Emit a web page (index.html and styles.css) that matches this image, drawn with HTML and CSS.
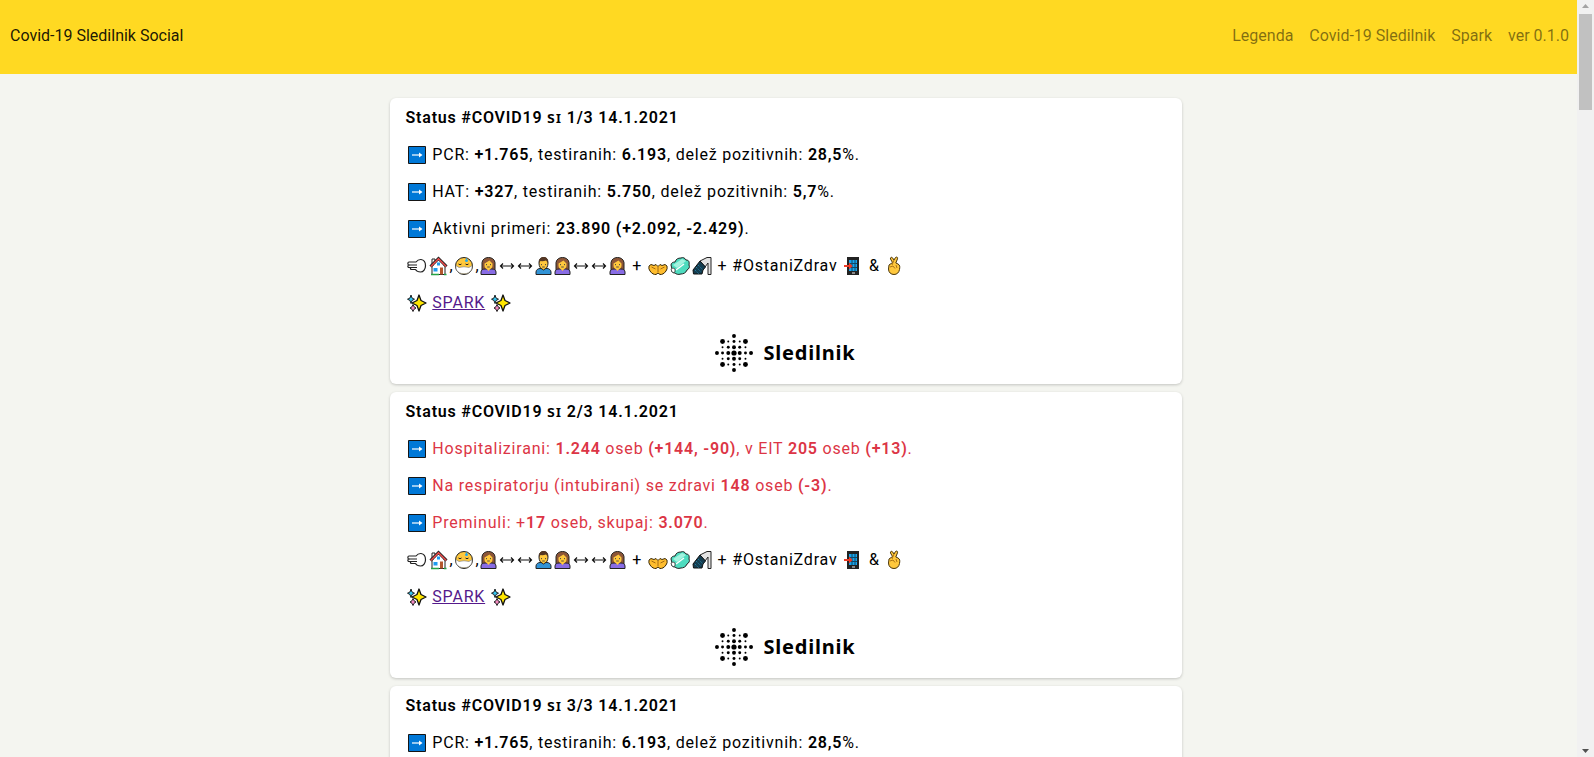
FILE: index.html
```html
<!DOCTYPE html>
<html lang="sl">
<head>
<meta charset="utf-8">
<meta name="viewport" content="width=device-width, initial-scale=1">
<title>Covid-19 Sledilnik Social</title>
<link rel="stylesheet" href="styles.css">
</head>
<body>
<svg class="sprite" aria-hidden="true">
  <symbol id="arrow" viewBox="0 0 22 20">
    <path fill="#0078d7" stroke="#151515" d="M2.500 1.500h17v17h-17z"/>
    <path fill="none" stroke="#fff" stroke-width="1.200" d="M6 10h9"/>
    <path fill="#fff" d="M13 7.500l3.500 2.500-3.500 2.500z"/>
  </symbol>
  <symbol id="wind" viewBox="0 0 22 20">
    <path fill="#fff" stroke="#222" stroke-width="1.200" stroke-linejoin="round" d="M3 6h7c1.500-2 3-2.600 5-2.500 3 .4 4.500 3 4.500 6.200s-2 6.300-5 6.300c-2 0-4-.8-5-2.500H5.500c-1.500 0-1.500-2 0-2H3c-1.500 0-1.500-2.500 0-2.500-1.500 0-1.500-3 0-3z"/>
    <path fill="none" stroke="#222" stroke-width="1.100" d="M3 9h8M4 11.500h7"/>
  </symbol>
  <symbol id="house" viewBox="0 0 22 20">
    <path fill="#fff" stroke="#222" d="M4 9.500h13v9H4z"/>
    <path fill="#fff" stroke="#222" d="M4 10V3h3v5"/>
    <path fill="#fff" d="M4.500 10.500L10.500 4l6 6.500z"/>
    <path fill="none" stroke="#222" stroke-width="3" d="M2.500 10.500l8-8 8 8"/>
    <path fill="none" stroke="#ef4b4b" stroke-width="1.500" d="M2.800 10.500l7.700-7.700 7.700 7.700"/>
    <path fill="#1d9bf0" d="M5.500 12h4v3.500h-4zM9 6.500h3v3H9z"/>
    <path fill="#b4572c" d="M12 11.500h3v7h-3z"/>
    <path stroke="#26a344" stroke-width="1.500" d="M3 18.500h8M16 18.500h2.500"/>
  </symbol>
  <symbol id="mask" viewBox="0 0 22 20">
    <circle cx="11" cy="10" r="8.500" fill="#ffc83d" stroke="#222"/>
    <path fill="#fff" stroke="#777" stroke-width=".6" d="M2.800 9.500L6 11.500q5-1.500 10 0l3.200-2c0 4-1.500 6-3.700 7.300-2.500 1.200-6.500 1.200-9 0C4 15.500 2.800 13.500 2.800 9.500z"/>
    <path fill="none" stroke="#222" d="M5.500 8q1.500 1.500 3 0M12.500 8q1.500 1.500 3 0"/>
    <path fill="#22a8ef" d="M13.500 2l1.700 3q-1.700 1.800-3.400 0z"/>
  </symbol>
  <symbol id="woman" viewBox="0 0 18 20">
    <path fill="#8d5637" stroke="#222" d="M2.500 15V6.500C3 3 6 1.500 9 1.500s6 1.500 6.500 5V15z"/>
    <path fill="#886ce4" stroke="#222" d="M1.500 18.500v-2.500c0-2 2-3 4-3h7c2 0 4 1 4 3v2.500z"/>
    <path fill="#ffc83d" d="M5 7.500l5-3 3 3v2c0 1.700-1 3-2.200 3.500L9 15l-1.800-2C6 12.500 5 11.200 5 9.500z"/>
    <path stroke="#444" stroke-width=".9" fill="none" d="M7 8v1.200M11 8v1.200M7.700 11h2.600"/>
  </symbol>
  <symbol id="man" viewBox="0 0 18 20">
    <path fill="#3193d6" stroke="#222" d="M1.500 18.500v-2.500c0-2 2-3.500 4-3.500h7c2 0 4 1.500 4 3.500v2.500z"/>
    <path fill="#ffc83d" stroke="#222" d="M4.500 7C4.500 3.500 6 1.500 9 1.500s4.500 2 4.500 5.500-1.500 5.500-3 6L9 14l-1.500-1C6 12.500 4.500 10.500 4.500 7z"/>
    <path fill="#553724" d="M4.500 7C4 3 6.500 1 9.500 1c3 0 4.500 3 4 6L11.500 4.500q-3 1-5.500.5z"/>
    <path stroke="#444" stroke-width=".9" fill="none" d="M7 8v1.200M11 8v1.200M7.700 11h2.600"/>
  </symbol>
  <symbol id="both" viewBox="0 0 18 20">
    <path fill="none" stroke="#111" stroke-width="1.200" d="M2 10h14M5 7.500L2.500 10 5 12.500M13 7.500l2.500 2.500-2.500 2.500"/>
  </symbol>
  <symbol id="palms" viewBox="0 0 22 20">
    <path fill="#ffbd2e" stroke="#3a2a08" stroke-linejoin="round" d="M2 10l2-1.500 3 1 2-1 2 2 2-2 2 1 3-1L20 10q.7 3-1 5c-2 3-4 3.500-6 3.500L11 17l-2 1.500c-2 0-4-.5-6-3.500Q1.300 13 2 10z"/>
    <path fill="none" stroke="#a46b12" d="M11 11v5M4.500 11l4 2M17.500 11l-4 2"/>
  </symbol>
  <symbol id="soap" viewBox="0 0 22 20">
    <path fill="#4edcbf" stroke="#222" stroke-linejoin="round" d="M2 9c0-2 2-3 4-3 1-3 3-4 6-4 2-1 4 0 5 2 3 0 3.500 2 3 5 1 2 0 4-2 5-1 3-4 4-6 4-3 1-5 0-6-1-3 0-4-2-3-4z"/>
    <path fill="#a3f3df" d="M4 9l9-6 4 2-9 7z"/>
    <path stroke="#fff" stroke-width="1.300" d="M7 14l8-6"/>
    <path fill="#fff" stroke="#222" stroke-width=".7" d="M2 13q2-2 4 0v3q-3 2-4-3z"/>
  </symbol>
  <symbol id="shower" viewBox="0 0 22 20">
    <path fill="#e3e3e3" stroke="#222" d="M9 5l7-3.500h4v17h-3V7L14 11z"/>
    <path fill="#143d50" stroke="#111" d="M2 14L9 5l5.500 6-2.500 3-1 4H2.500z"/>
    <path fill="none" stroke="#2b91ba" stroke-dasharray="1 1.500" d="M7 9l5 5M5 11l5 5M4 14l4 4"/>
  </symbol>
  <symbol id="phone" viewBox="0 0 22 20">
    <path fill="#222" d="M5 1h12v18H5z"/>
    <path fill="#16a5ee" d="M7 4h8v11H7z"/>
    <path stroke="#124763" d="M10 4v11M13 4v11M7 7.500h8M7 11.500h8"/>
    <path stroke="#eee" d="M10 17h3"/>
    <path fill="#ed3b25" d="M2 9h5V6.500l3.500 3.500L7 13.500V11H2z"/>
  </symbol>
  <symbol id="fingers" viewBox="0 0 22 20">
    <path fill="#ffc83d" stroke="#4a360c" stroke-linejoin="round" d="M4 9L7.500 6.500 5.500 3c-.5-1.500 1-2.300 2-1.200L9 4l1.500-2.500c1-1 2.700-.2 2 1.300L10.800 7l2.200 1c2 1 2 3 1.500 5.500-.5 3-2.500 5-5.500 5S3.500 16.500 3.500 13z"/>
    <path fill="none" stroke="#ad7415" d="M9 4L7 9M5 11l3-1 2 2.500M11 9l1 3"/>
  </symbol>
  <symbol id="sparkles" viewBox="0 0 22 20">
    <path fill="#ffe600" stroke="#111" stroke-width="1.300" stroke-linejoin="round" d="M13 2l2 5.500 5 2.500-5 2.500L13 18l-2-5.500L6 10l5-2.500z"/>
    <path fill="#35c4f0" stroke="#111" stroke-width=".9" d="M5 2l1 3 2.500 1.200L6 7.500 5 10.500l-1-3-2.500-1.300L4 5z"/>
    <path fill="#f48ac0" stroke="#111" stroke-width=".9" d="M7 11.500l1 2.200 2 1.300-2 1.300-1 2.200-1-2.200L4 15l2-1.300z"/>
  </symbol>
  <symbol id="dots" viewBox="-58 -58 116 116">
    <g id="ray">
      <circle cy="-52" r="6"/>
      <circle cy="-35" r="4.500"/>
      <circle cy="-17.500" r="6"/>
      <circle cx="-35" cy="-35" r="7.500"/>
      <circle cx="-17.500" cy="-35" r="3"/>
      <circle cx="17.500" cy="-35" r="3"/>
      <circle cx="-17.500" cy="-17.500" r="4.500"/>
    </g>
    <use href="#ray" transform="rotate(90)"/>
    <use href="#ray" transform="rotate(180)"/>
    <use href="#ray" transform="rotate(270)"/>
    <circle r="8"/>
  </symbol>
</svg>

<header class="navbar">
  <a class="brand" href="#">Covid-19 Sledilnik Social</a>
  <nav class="links">
    <a href="#">Legenda</a>
    <a href="#">Covid-19 Sledilnik</a>
    <a href="#">Spark</a>
    <a href="#">ver 0.1.0</a>
  </nav>
</header>

<main class="feed">
  <article class="card">
    <h2 class="line">Status #COVID19 <span class="country">sɪ</span> 1/3 14.1.2021</h2>
    <p class="line"><svg class="emoji"><use href="#arrow"/></svg> PCR: <b>+1.765</b>, testiranih: <b>6.193</b>, delež pozitivnih: <b>28,5</b>%.</p>
    <p class="line"><svg class="emoji"><use href="#arrow"/></svg> HAT: <b>+327</b>, testiranih: <b>5.750</b>, delež pozitivnih: <b>5,7</b>%.</p>
    <p class="line"><svg class="emoji"><use href="#arrow"/></svg> Aktivni primeri: <b>23.890 (+2.092, -2.429)</b>.</p>
    <p class="line"><svg class="emoji"><use href="#wind"/></svg><svg class="emoji"><use href="#house"/></svg>,<svg class="emoji"><use href="#mask"/></svg>,<svg class="emoji person"><use href="#woman"/></svg><svg class="emoji both"><use href="#both"/></svg><svg class="emoji both"><use href="#both"/></svg><svg class="emoji person"><use href="#man"/></svg><svg class="emoji person"><use href="#woman"/></svg><svg class="emoji both"><use href="#both"/></svg><svg class="emoji both"><use href="#both"/></svg><svg class="emoji person"><use href="#woman"/></svg> + <svg class="emoji"><use href="#palms"/></svg><svg class="emoji"><use href="#soap"/></svg><svg class="emoji"><use href="#shower"/></svg> + #OstaniZdrav <svg class="emoji"><use href="#phone"/></svg> &amp; <svg class="emoji"><use href="#fingers"/></svg></p>
    <p class="line"><svg class="emoji"><use href="#sparkles"/></svg> <a class="spark" href="#">SPARK</a> <svg class="emoji"><use href="#sparkles"/></svg></p>
    <div class="logo"><svg class="dots"><use href="#dots"/></svg><span>Sledilnik</span></div>
  </article>

  <article class="card">
    <h2 class="line">Status #COVID19 <span class="country">sɪ</span> 2/3 14.1.2021</h2>
    <p class="line alert"><svg class="emoji"><use href="#arrow"/></svg> Hospitalizirani: <b>1.244</b> oseb <b>(+144, -90)</b>, v EIT <b>205</b> oseb <b>(+13)</b>.</p>
    <p class="line alert"><svg class="emoji"><use href="#arrow"/></svg> Na respiratorju (intubirani) se zdravi <b>148</b> oseb <b>(-3)</b>.</p>
    <p class="line alert"><svg class="emoji"><use href="#arrow"/></svg> Preminuli: +<b>17</b> oseb, skupaj: <b>3.070</b>.</p>
    <p class="line"><svg class="emoji"><use href="#wind"/></svg><svg class="emoji"><use href="#house"/></svg>,<svg class="emoji"><use href="#mask"/></svg>,<svg class="emoji person"><use href="#woman"/></svg><svg class="emoji both"><use href="#both"/></svg><svg class="emoji both"><use href="#both"/></svg><svg class="emoji person"><use href="#man"/></svg><svg class="emoji person"><use href="#woman"/></svg><svg class="emoji both"><use href="#both"/></svg><svg class="emoji both"><use href="#both"/></svg><svg class="emoji person"><use href="#woman"/></svg> + <svg class="emoji"><use href="#palms"/></svg><svg class="emoji"><use href="#soap"/></svg><svg class="emoji"><use href="#shower"/></svg> + #OstaniZdrav <svg class="emoji"><use href="#phone"/></svg> &amp; <svg class="emoji"><use href="#fingers"/></svg></p>
    <p class="line"><svg class="emoji"><use href="#sparkles"/></svg> <a class="spark" href="#">SPARK</a> <svg class="emoji"><use href="#sparkles"/></svg></p>
    <div class="logo"><svg class="dots"><use href="#dots"/></svg><span>Sledilnik</span></div>
  </article>

  <article class="card">
    <h2 class="line">Status #COVID19 <span class="country">sɪ</span> 3/3 14.1.2021</h2>
    <p class="line"><svg class="emoji"><use href="#arrow"/></svg> PCR: <b>+1.765</b>, testiranih: <b>6.193</b>, delež pozitivnih: <b>28,5</b>%.</p>
  </article>
</main>

<div class="scrollbar" aria-hidden="true">
  <svg class="step" viewBox="0 0 17 14"><path fill="#a3a3a3" d="M5 8h7L8.500 4z"/></svg>
  <div class="thumb"></div>
  <svg class="step end" viewBox="0 0 17 14"><path fill="#505050" d="M5 6h7l-3.500 4z"/></svg>
</div>
</body>
</html>
```
FILE: styles.css
```css
* {
  box-sizing: border-box;
}

body {
  margin: 0;
  padding-right: 17px;
  background: #f4f5f0;
  color: #000;
  font-family: Roboto, "Liberation Sans", sans-serif;
  font-size: 16px;
  line-height: 24px;
}

.sprite {
  display: none;
}

.navbar {
  display: flex;
  justify-content: space-between;
  padding: 24px 8px 26px 10px;
  background: #ffd922;
}

.navbar a {
  color: rgba(0, 0, 0, 0.5);
  text-decoration: none;
}

.navbar .brand {
  color: rgba(0, 0, 0, 0.9);
}

.links {
  display: flex;
  gap: 16px;
}

.feed {
  display: grid;
  grid-template-columns: minmax(0, 792px);
  justify-content: center;
  gap: 8px;
  padding: 24px 6px 0 0;
}

.card {
  padding: 9px 16px 7px;
  border-radius: 6px;
  background: #fff;
  box-shadow: 0 1px 3px rgba(0, 0, 0, 0.2);
  letter-spacing: 0.05em;
}

.line {
  margin: 0 0 16px;
  font-size: 16px;
  font-weight: 400;
  line-height: 21px;
}

h2.line,
.line b {
  font-weight: 600;
}

.country {
  font-family: "Noto Sans", "DejaVu Sans", sans-serif;
  font-size: 16px;
}

.alert {
  color: #dc3545;
}

.emoji {
  width: 22px;
  height: 20px;
  margin: -4px 0;
  vertical-align: -1px;
}

.emoji.person {
  width: 19px;
}

.emoji.both {
  width: 18px;
}

.spark {
  color: #551a8b;
}

.logo {
  display: flex;
  align-items: center;
  justify-content: center;
  gap: 10px;
  height: 48px;
  font-family: "Noto Sans", sans-serif;
  font-size: 20px;
  font-weight: 700;
}

.dots {
  width: 38px;
  height: 38px;
}

.scrollbar {
  position: fixed;
  top: 0;
  right: 0;
  bottom: 0;
  display: flex;
  flex-direction: column;
  width: 17px;
  background: #f1f1f1;
}

.step {
  width: 17px;
  height: 14px;
}

.step.end {
  margin-top: auto;
}

.thumb {
  height: 96px;
  margin: 0 2px;
  background: #c1c1c1;
}
```
